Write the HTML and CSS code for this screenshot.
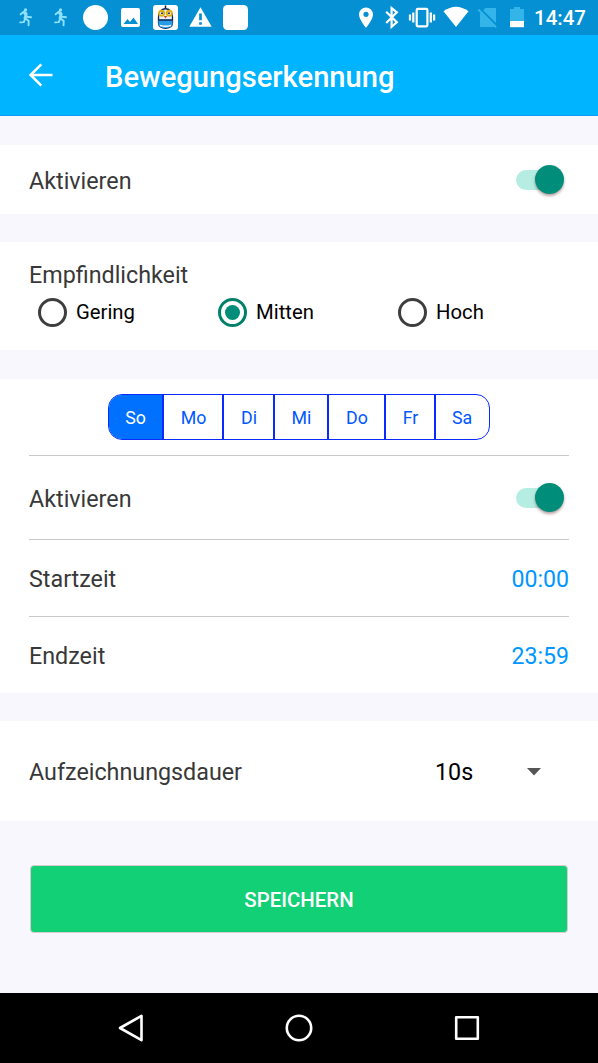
FILE: index.html
```html
<!DOCTYPE html>
<html lang="de">
<head>
<meta charset="utf-8">
<title>Bewegungserkennung</title>
<link rel="stylesheet" href="styles.css">
</head>
<body>
<div class="screen">
  <div class="status">
    <div class="notifications">
      <svg viewBox="4.5 0 35 35"><g fill="none" stroke="#8fe0ff" stroke-width="1.9" stroke-linecap="round" stroke-linejoin="round"><path d="M20 12.500l3.500 4.200 4 .6M23 13.300l-1.400 4.800 3.600 3-.2 4.300M21.500 19.200l-1.200 2.900-3.600.3M20 12l-2.900 2.300"/><path d="M20.500 12l1.500 1.500M22.700 14.200l-1.300 3.800" stroke-width="2.700"/></g><circle cx="22" cy="10" r="1.700" fill="#8fe0ff"/></svg>
      <svg viewBox="4.5 0 35 35"><g fill="none" stroke="#8fe0ff" stroke-width="1.9" stroke-linecap="round" stroke-linejoin="round"><path d="M20 12.500l3.500 4.200 4 .6M23 13.300l-1.400 4.800 3.600 3-.2 4.300M21.500 19.200l-1.200 2.900-3.600.3M20 12l-2.900 2.300"/><path d="M20.500 12l1.500 1.500M22.700 14.200l-1.300 3.800" stroke-width="2.700"/></g><circle cx="22" cy="10" r="1.700" fill="#8fe0ff"/></svg>
      <svg viewBox="0 0 35 35"><circle cx="17.5" cy="17.5" r="12.5" fill="#fff"/></svg>
      <svg viewBox="0 0 35 35"><rect x="8" y="8" width="19" height="19" rx="2" fill="#fff"/><path d="M10.5 24l4-5 2.5 3 3.5-4.5 4.500 6.500z" fill="#0490d2"/></svg>
      <svg viewBox="0 0 35 35"><rect x="5" y="5" width="25" height="25" rx="3" fill="#fff"/><path d="M17.500 5.500v4" stroke="#123" stroke-width="1.500"/><path d="M10.500 17c0-11 14-11 14 0v6c0 7-14 7-14 0z" fill="#e8eff5" stroke="#102a58" stroke-width="1.300"/><path d="M10.500 20h14v3.500c0 6-14 6-14 0z" fill="#2a9be6"/><path d="M10.500 20h14" stroke="#102a58" stroke-width="1.600"/><path d="M12 25.300q5.500 2 11 0" fill="none" stroke="#fff" stroke-width="1.400"/><circle cx="13.700" cy="13.300" r="2.500" fill="#fff" stroke="#e0b010" stroke-width="1.900"/><circle cx="21.300" cy="13.300" r="2.500" fill="#fff" stroke="#e0b010" stroke-width="1.900"/><circle cx="14" cy="13.300" r="1" fill="#102a58"/><circle cx="21" cy="13.300" r="1" fill="#102a58"/><path d="M15.800 16h3.400l-1.700 2.400z" fill="#d33a20"/></svg>
      <svg viewBox="0 0 35 35"><path d="M17.500 7.200l11.200 19.600H6.300z" fill="#fff"/><path d="M17.500 13.600v6.600m0 2v2.500" stroke="#0490d2" stroke-width="2.700"/></svg>
      <svg viewBox="0 0 35 35"><rect x="5" y="5" width="25" height="25" rx="4.500" fill="#fff"/></svg>
    </div>
    <div class="system">
      <svg width="25" height="35"><path fill="#fff" fill-rule="evenodd" d="M12 7.500a7 7 0 0 0-7 7c0 5 7 13.300 7 13.300s7-8.300 7-13.300a7 7 0 0 0-7-7zm0 4.200a2.600 2.600 0 1 1 0 5.200 2.600 2.600 0 0 1 0-5.200z"/></svg>
      <svg width="26" height="35"><path d="M7.200 11.800l10.600 10.400-5.200 4.600V8l5.200 4.400L7.200 23" fill="none" stroke="#fff" stroke-width="2.200"/></svg>
      <svg width="34" height="35"><g fill="none" stroke="#fff" stroke-width="2.200"><rect x="11.700" y="8.900" width="10.700" height="17.400" rx="1"/><path d="M8.300 12.500v10M5 14.500v6M25.800 12.500v10M29.100 14.500v6"/></g></svg>
      <svg width="34" height="35"><path d="M4.500 11.300Q17 2.300 29.500 11.300L17 27z" fill="#fff"/></svg>
      <svg width="30" height="35"><path d="M12.500 8H23v19H7V13.500z" fill="#33b5ea"/><path d="M6.700 8.100l17.800 17.800" stroke="#0490d2" stroke-width="1.900"/><path d="M5.300 9.500l17.800 17.800" stroke="#33b5ea" stroke-width="1.900"/></svg>
      <svg width="31" height="35"><path d="M7 8.900h4V7h6v1.900h4V21H7z" fill="#33b5ea"/><path d="M7 21h14v6.200H7z" fill="#fff"/></svg>
      <span class="clock">14:47</span>
    </div>
  </div>
  <header class="appbar">
    <svg class="back" width="26" height="26" viewBox="0 0 26 26"><path d="M24.500 13H3M13.300 2.300L2.600 13l10.700 10.700" fill="none" stroke="#fff" stroke-width="2.500"/></svg>
    <h1 class="title">Bewegungserkennung</h1>
  </header>
  <main class="content">
    <section class="card activate"><span class="label">Aktivieren</span><span class="switch"><i class="thumb"></i></span></section>
    <section class="card sensitivity">
      <div class="label">Empfindlichkeit</div>
      <div class="radios">
        <span class="option"><i class="radio"></i>Gering</span>
        <span class="option"><i class="radio checked"></i>Mitten</span>
        <span class="option"><i class="radio"></i>Hoch</span>
      </div>
    </section>
    <section class="card schedule">
      <div class="days"><span class="day selected">So</span><span class="day">Mo</span><span class="day">Di</span><span class="day">Mi</span><span class="day">Do</span><span class="day">Fr</span><span class="day">Sa</span></div>
      <div class="row row-active"><span class="label">Aktivieren</span><span class="switch"><i class="thumb"></i></span></div>
      <div class="row row-start"><span class="label">Startzeit</span><span class="time">00:00</span></div>
      <div class="row row-end"><span class="label">Endzeit</span><span class="time">23:59</span></div>
    </section>
    <section class="card duration"><span class="label">Aufzeichnungsdauer</span><span class="select">10s<svg width="14" height="8"><path d="M0 0h14L7 7.500z" fill="#555"/></svg></span></section>
    <button class="save">SPEICHERN</button>
  </main>
  <nav class="navbar">
    <svg width="30" height="30" viewBox="0 0 30 30"><path d="M23.500 2.800v24.400L2 15z"/></svg>
    <svg width="30" height="30" viewBox="0 0 30 30"><circle cx="15" cy="15" r="12.200"/></svg>
    <svg width="30" height="30" viewBox="0 0 30 30"><rect x="4.200" y="4.200" width="21.600" height="21.600"/></svg>
  </nav>
</div>
</body>
</html>
```
FILE: styles.css
```css
* { box-sizing: border-box; }
body { margin: 0; font-family: Roboto, sans-serif; }
.screen { display: flex; flex-direction: column; width: 598px; height: 1063px; overflow: hidden; background: #f7f7fd; }
.status { display: flex; justify-content: space-between; height: 35px; background: #0490d2; }
.notifications { display: flex; padding-left: 8px; }
.notifications svg { width: 35px; height: 35px; }
.system { display: flex; width: 244px; }
.system svg { flex: none; }
.clock { font-size: 20.500px; line-height: 36px; font-weight: 500; color: #fff; }
.appbar { display: flex; align-items: center; height: 81px; padding-left: 28px; background: #00b4ff; border-bottom: 1px solid #0a9cf5; }
.title { margin: 3px 0 0 51px; color: #fff; font-size: 29.150px; line-height: 36px; font-weight: 500; }
.content { display: flex; flex-direction: column; height: 877px; padding-top: 29px; }
.card { background: #fff; padding: 0 29px; }
.label { color: #383838; font-size: 23.300px; line-height: 28px; }
.activate { display: flex; align-items: center; justify-content: space-between; height: 69px; }
.activate .label, .row .label { padding-top: 2px; }
.switch { display: block; width: 44px; height: 20px; margin-right: 9px; border-radius: 10px; background: #b6ede3; }
.thumb { display: block; width: 29px; height: 29px; margin: -5px 0 0 19px; border-radius: 50%; background: #008e7a; box-shadow: 0 2px 3px rgba(80, 20, 20, .4); }
.sensitivity { height: 108px; margin-top: 28px; padding-top: 19px; }
.radios { display: flex; padding: 8px 0 0 9px; }
.option { display: flex; flex: none; align-items: center; gap: 9px; width: 180px; height: 30px; font-size: 20.300px; color: #000; }
.radio { display: block; width: 29px; height: 29px; border: 3px solid #3e3e3e; border-radius: 50%; }
.radio.checked { border-color: #008069; padding: 4px; background: #008e7a content-box; }
.schedule { height: 314px; margin-top: 29px; padding-top: 15px; }
.days { display: grid; grid-template-columns: 53px 60px 51px 54px 57px 50px 55px; width: 382px; height: 46px; margin-left: 79px; border: 1px solid #0a2aff; border-radius: 14px; overflow: hidden; }
.day { display: flex; align-items: center; justify-content: center; padding: 1px 0 0 1px; font-size: 17.800px; color: #0057ff; border-left: 2px solid #0a2aff; }
.day:last-child { padding-right: 2px; }
.day.selected { padding: 1px 0 0; background: #0070ff; color: #fff; border-left: 0; }
.row { display: flex; align-items: center; justify-content: space-between; border-top: 1px solid #c8c8c8; }
.row-active { height: 84px; margin-top: 15px; }
.row-start { height: 77px; }
.row-end { height: 76px; padding-top: 1px; }
.time { padding-top: 2px; font-size: 23.100px; color: #0096ff; }
.duration { display: flex; align-items: center; justify-content: space-between; height: 100px; margin-top: 28px; padding-top: 2px; }
.select { display: flex; align-items: center; justify-content: space-between; width: 106px; margin-right: 28px; font-size: 23.300px; color: #000; }
.save { width: 538px; height: 68px; margin: 44px 0 0 30px; padding: 1px 0 0; border: 1px solid #d8ccd0; border-radius: 4px; background: #12d076; color: #fff; font-family: inherit; font-size: 20.400px; font-weight: 500; }
.navbar { display: flex; gap: 138px; height: 70px; padding: 20px 0 0 118px; background: #000; }
.navbar svg { fill: none; stroke: #fff; stroke-width: 2.600px; stroke-linejoin: round; }
.navbar svg:first-child { margin-right: -2px; }
```
